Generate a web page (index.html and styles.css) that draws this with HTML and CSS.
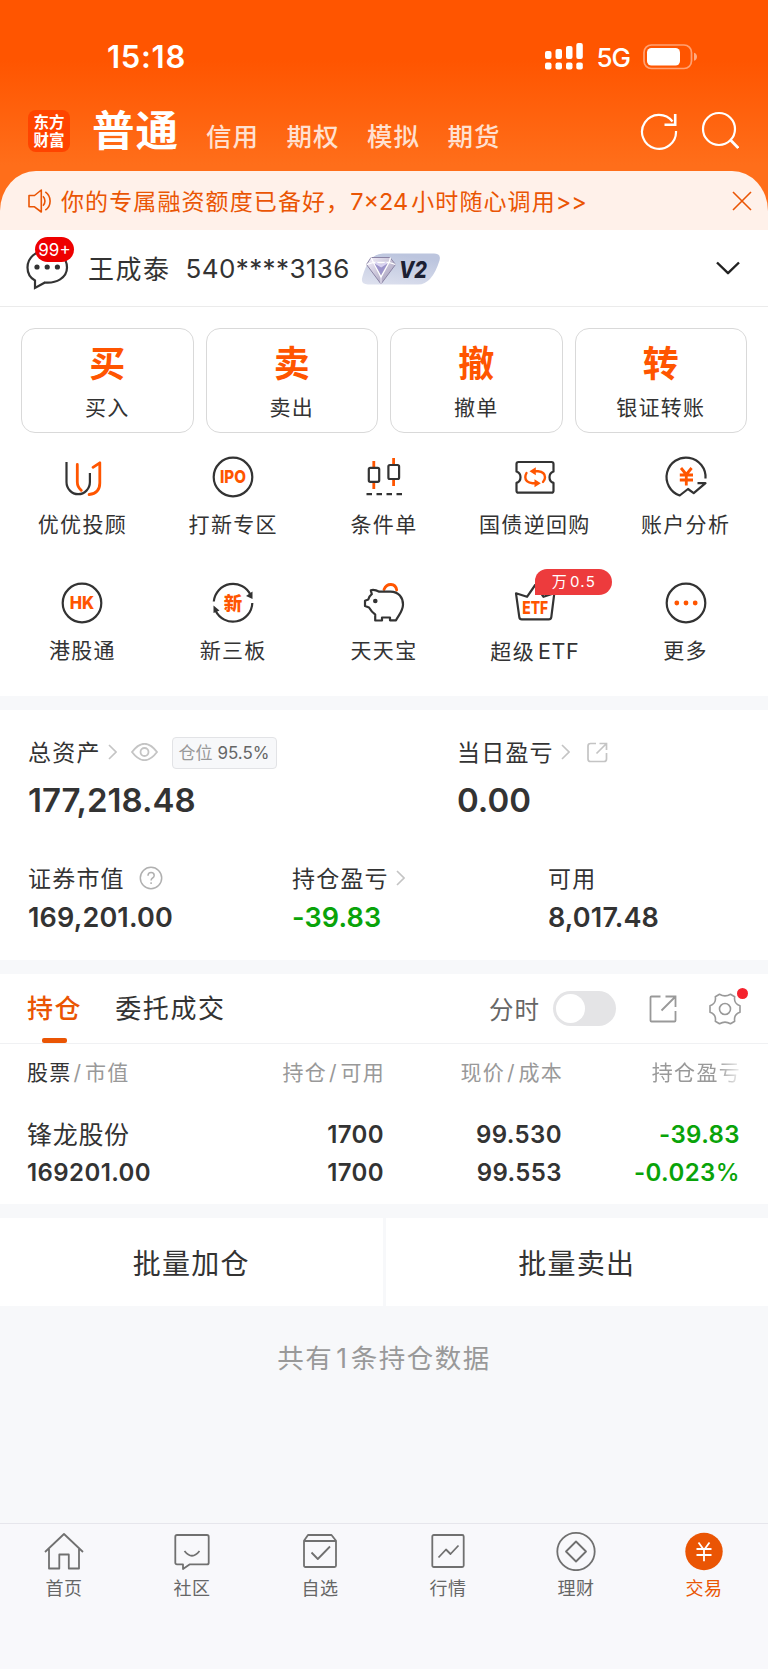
FILE: index.html
```html
<!DOCTYPE html>
<html lang="zh-CN">
<head>
    <meta charset="UTF-8">
    <meta name="viewport" content="width=device-width, initial-scale=1.0">
    <title>东方财富 - 交易</title>
    <link rel="stylesheet" href="styles.css">
</head>
<body>
    <header class="header">
        <div class="status-bar">
            <span class="time">15:18</span>
            <div class="status-icons">
                <svg class="signal" width="38" height="27" viewBox="0 0 38 27" fill="#fff">
                    <rect x="0" y="8" width="6.5" height="8" rx="2"/>
                    <rect x="10.5" y="6" width="6.5" height="10" rx="2"/>
                    <rect x="21" y="3" width="6.5" height="13" rx="2"/>
                    <rect x="31.3" y="0" width="6.5" height="16" rx="2"/>
                    <rect x="0" y="19.5" width="6.5" height="7" rx="2"/>
                    <rect x="10.5" y="19.5" width="6.5" height="7" rx="2"/>
                    <rect x="21" y="19.5" width="6.5" height="7" rx="2"/>
                    <rect x="31.3" y="19.5" width="6.5" height="7" rx="2"/>
                </svg>
                <span class="network">5G</span>
                <svg class="battery" width="55" height="26" viewBox="0 0 55 26">
                    <rect x="1" y="1" width="47.5" height="23.5" rx="7.5" fill="none" stroke="#fff" stroke-opacity=".45" stroke-width="1.7"/>
                    <rect x="4" y="4" width="33" height="17.5" rx="4.5" fill="#fff"/>
                    <path d="M51 8.8c4 1 4 7 0 8z" fill="#fff" fill-opacity=".5"/>
                </svg>
            </div>
        </div>

        <div class="top-nav">
            <div class="logo">东方<br>财富</div>
            <nav class="account-tabs">
                <span class="account-tab active">普通</span>
                <span class="account-tab">信用</span>
                <span class="account-tab">期权</span>
                <span class="account-tab">模拟</span>
                <span class="account-tab">期货</span>
            </nav>
            <div class="top-actions">
                <svg width="38" height="40" viewBox="0 0 38 40" fill="none" stroke="#fff" stroke-width="2.2">
                    <path d="M36 20A17 17 0 1 1 32.5 10.5"/>
                    <path d="M35.2 3v10.8H24.5" stroke-width="2.6"/>
                </svg>
                <svg width="38" height="40" viewBox="0 0 38 40" fill="none" stroke="#fff" stroke-width="2.2">
                    <circle cx="18" cy="18" r="16"/>
                    <path d="M29 28.5l8.3 8.5" stroke-width="2.8"/>
                </svg>
            </div>
        </div>

        <div class="notice">
            <svg width="24" height="24" viewBox="0 0 24 24" fill="none" stroke="#ea5504" stroke-width="1.6" stroke-linejoin="round">
                <path d="M1 6.5h5.5L13.3 1v22L6.5 17.8H1z"/>
                <path d="M15 7.2c2.6 2.6 2.6 7 0 9.6M17.3 2.8c6.4 4.3 6.4 14.1 0 18.4"/>
            </svg>
            <p>你的专属融资额度已备好，<span class="latin">7×24</span>小时随心调用<span class="latin">&gt;&gt;</span></p>
            <svg class="notice-close" width="20" height="20" viewBox="0 0 20 20" fill="none" stroke="#ea5504" stroke-width="1.6">
                <path d="M1 1l18 18M19 1L1 19"/>
            </svg>
        </div>
    </header>

    <section class="account">
        <div class="message">
            <svg width="44" height="44" viewBox="0 0 44 44" fill="none" stroke="#333" stroke-width="2.2">
                <path d="M10 41V33.5C4.5 30.5 2.5 26 2.5 20.5 2.5 10.5 11 3.5 22.3 3.5S42 10.5 42 20.5C42 31 31 36.5 20 35.5Z"/>
                <g fill="#333" stroke="none"><circle cx="12" cy="20" r="2.6"/><circle cx="22.2" cy="20" r="2.6"/><circle cx="32.4" cy="20" r="2.6"/></g>
            </svg>
            <span class="message-count">99+</span>
        </div>
        <span class="user-name">王成泰</span>
        <span class="user-number">540****3136</span>
        <svg class="level" width="80" height="32" viewBox="0 0 80 32">
            <defs>
                <linearGradient id="levelBg" x1="0" y1="1" x2=".4" y2="0">
                    <stop offset="0" stop-color="#dfe2ef"/>
                    <stop offset="1" stop-color="#bcc5de"/>
                </linearGradient>
                <linearGradient id="gem" x1="0" y1="0" x2="1" y2="1">
                    <stop offset="0" stop-color="#f6f2fd"/>
                    <stop offset="1" stop-color="#9a94b2"/>
                </linearGradient>
            </defs>
            <path d="M22 .5H73q7.500 0 5.500 7Q71 31.500 57 31.500H7Q-1 31.500 1.500 23.500 8 .5 22 .5Z" fill="url(#levelBg)"/>
            <path d="M10 4.500H29L34.500 11.500 20 31 5.500 11.500Z" fill="url(#gem)" stroke="#8b84a5" stroke-width="1"/>
            <path d="M10 4.500l2.500 5H28l1.500-5M5.500 11.500l7-2L20 24l8-14.500 6.500 2" fill="none" stroke="#fff" stroke-width="1.3"/>
            <path d="M13.500 10.500l6.700 4 6.300-4L20 22Z" fill="#9c94cb"/>
            <path d="M14.500 9.500l5.700 3.500 5.300-3.500" fill="none" stroke="#d9d3f3" stroke-width="2"/>
            <path d="M20 24v7" stroke="#efeaf8"/>
            <text class="level-text" x="38" y="25" textLength="28" lengthAdjust="spacingAndGlyphs">V2</text>
        </svg>
        <svg class="account-arrow" width="24" height="14" viewBox="0 0 24 14" fill="none" stroke="#222" stroke-width="2.4" stroke-linejoin="round">
            <path d="M1 1.5L12 12.2 23 1.5"/>
        </svg>
    </section>

    <section class="trade">
        <div class="trade-cards">
            <div class="trade-card"><strong>买</strong><span>买入</span></div>
            <div class="trade-card"><strong>卖</strong><span>卖出</span></div>
            <div class="trade-card"><strong>撤</strong><span>撤单</span></div>
            <div class="trade-card"><strong>转</strong><span>银证转账</span></div>
        </div>

        <div class="menu">
            <div class="menu-item">
                <svg class="icon" viewBox="0 0 44 44">
                    <path class="dark" d="M6.5 7V27a11.7 12.2 0 0 0 23.4 0V18"/>
                    <path class="hot" d="M17.3 9.5V27q0 5 4 8.3M33 12.3l6.8-4.5V28q0 10.5-10.7 11.500"/>
                </svg>
                <span>优优投顾</span>
            </div>
            <div class="menu-item">
                <svg class="icon" viewBox="0 0 44 44">
                    <circle class="dark" cx="22" cy="22" r="19.3"/>
                    <text class="icon-text" x="22" y="28.3" font-size="17.5" textLength="26" lengthAdjust="spacingAndGlyphs">IPO</text>
                </svg>
                <span>打新专区</span>
            </div>
            <div class="menu-item">
                <svg class="icon" viewBox="0 0 44 44">
                    <path class="hot flat" d="M11.8 6v6.5M11.8 27.5v6.5M31.6 3v6.5M31.6 24.5v6.5"/>
                    <rect class="dark" x="6.8" y="12.8" width="10.4" height="14" rx="1.5"/>
                    <rect class="dark" x="26.4" y="10" width="10.7" height="14" rx="1.5"/>
                    <path class="dark" d="M4.5 39.2H40" stroke-dasharray="5.5 4.5"/>
                </svg>
                <span>条件单</span>
            </div>
            <div class="menu-item">
                <svg class="icon" viewBox="0 0 44 44">
                    <path class="dark" d="M5.5 7h33q2 0 2 2v7.5q-4 1.5-4 5.7t4 5.7v7.8q0 2-2 2h-33q-2 0-2-2v-7.8q4-1.5 4-5.7t-4-5.7V9q0-2 2-2Z"/>
                    <path class="hot thin" d="M22 16.2H25Q32 16.8 32 22.3 32 25 30 27M22 28.2H19.5Q12.3 27.5 12.3 22.3 12.3 20 13.5 18"/>
                    <path d="M22.8 12.2v8l-6.3-4zM21.5 24.2v8l6.3-4z" fill="#ff5500"/>
                </svg>
                <span>国债逆回购</span>
            </div>
            <div class="menu-item">
                <svg class="icon" viewBox="0 0 44 44">
                    <path class="dark" d="M41.5 23.5A19.5 19.5 0 1 0 15.7 40.5L24 34l5.7 4.2L41.5 28.2h-8"/>
                    <path class="hot flat" d="M17 13l5.3 6.5L27.6 13M15.8 20h13.2M15.8 25h13.2M22.3 19v11.5"/>
                </svg>
                <span>账户分析</span>
            </div>
            <div class="menu-item">
                <svg class="icon" viewBox="0 0 44 44">
                    <circle class="dark" cx="22" cy="22" r="19.3"/>
                    <text class="icon-text" x="22" y="28.3" font-size="17.5" textLength="24.5" lengthAdjust="spacingAndGlyphs">HK</text>
                </svg>
                <span>港股通</span>
            </div>
            <div class="menu-item">
                <svg class="icon" viewBox="0 0 44 44">
                    <path class="dark" d="M2.8 20.5A19.3 19.3 0 0 1 39.5 14M41.3 22A19.3 19.3 0 0 1 4.5 29.5"/>
                    <path d="M41.5 10.5v7.5l-6.5-3zM2.5 24.5v7.5l6-2.5z" fill="#333"/>
                    <text class="icon-text" x="22" y="28.7" font-size="18.5">新</text>
                </svg>
                <span>新三板</span>
            </div>
            <div class="menu-item">
                <svg class="icon" viewBox="0 0 44 44">
                    <path class="hot" d="M22 8.5C25 1.5 33.5 2 34.7 9"/>
                    <path class="dark" d="M8.8 9.2c3-.8 6 .2 8.5 1.5H28C37 10.5 41 17 41 23.5S37 33.5 34 39.3H28V36.5H20V39.5H13.2V33.5C10 31.5 8.5 29 7 26.5L3 25V19.8l3.3-1.3C7 16 8 14.5 9.8 13.2Z"/>
                    <circle cx="13.3" cy="20" r="2.3" fill="#333"/>
                </svg>
                <span>天天宝</span>
            </div>
            <div class="menu-item">
                <svg class="icon" viewBox="0 0 44 44">
                    <path class="dark" d="M3 12.3l11 3.5L22.2 4l8.3 11.8 10.8-3.5-3 23.8q-.4 2.3-2.5 2.3H8.8q-2.2 0-2.5-2.3Z"/>
                    <text class="icon-text" x="22.2" y="32.5" font-size="18" textLength="26" lengthAdjust="spacingAndGlyphs">ETF</text>
                </svg>
                <em class="menu-badge">万<b>0.5</b></em>
                <span>超级<b class="menu-latin">ETF</b></span>
            </div>
            <div class="menu-item">
                <svg class="icon" viewBox="0 0 44 44">
                    <circle class="dark" cx="22" cy="22" r="19.3"/>
                    <g fill="#ff5500"><circle cx="12.8" cy="22" r="2.4"/><circle cx="22" cy="22" r="2.4"/><circle cx="31.2" cy="22" r="2.4"/></g>
                </svg>
                <span>更多</span>
            </div>
        </div>
    </section>

    <section class="assets">
        <div class="asset-main">
            <div class="asset">
                <div class="asset-label">
                    总资产
                    <svg class="more" width="9" height="16" viewBox="0 0 9 16"><path d="M1 1l7 7-7 7"/></svg>
                    <svg class="eye" width="27" height="18" viewBox="0 0 27 18" fill="none" stroke="#c4c4c4" stroke-width="1.8">
                        <path d="M1 9Q13.5-7.5 26 9 13.5 25.5 1 9Z"/>
                        <circle cx="13.5" cy="9" r="4"/>
                    </svg>
                    <span class="position-tag">仓位 <b>95.5%</b></span>
                </div>
                <div class="asset-value big">177,218.48</div>
            </div>
            <div class="asset">
                <div class="asset-label">
                    当日盈亏
                    <svg class="more" width="9" height="16" viewBox="0 0 9 16"><path d="M1 1l7 7-7 7"/></svg>
                    <svg class="share" width="21" height="21" viewBox="0 0 21 21" fill="none" stroke="#c4c4c4" stroke-width="1.7">
                        <path d="M9 1.5H3.5q-2.500 0-2.500 2.500v13q0 2.500 2.500 2.500h13.500q2.500 0 2.500-2.500V11M12.500 1.500h7v6.500M19.500 1.500L9.500 11.500"/>
                    </svg>
                </div>
                <div class="asset-value big">0.00</div>
            </div>
        </div>
        <div class="asset-sub">
            <div class="asset">
                <div class="asset-label">
                    证券市值
                    <svg class="help" width="24" height="24" viewBox="0 0 24 24" fill="none" stroke="#b0b0b0" stroke-width="1.5">
                        <circle cx="12" cy="12" r="10.7"/>
                        <path d="M9 9.8q0-3.2 3.1-3.2t3.1 2.9q0 1.5-1.6 2.5t-1.5 2.5M12.1 16.2v1.8"/>
                    </svg>
                </div>
                <div class="asset-value">169,201.00</div>
            </div>
            <div class="asset">
                <div class="asset-label">
                    持仓盈亏
                    <svg class="more" width="9" height="16" viewBox="0 0 9 16"><path d="M1 1l7 7-7 7"/></svg>
                </div>
                <div class="asset-value down">-39.83</div>
            </div>
            <div class="asset">
                <div class="asset-label">可用</div>
                <div class="asset-value">8,017.48</div>
            </div>
        </div>
    </section>

    <section class="holdings">
        <div class="tabs">
            <span class="tab active">持仓</span>
            <span class="tab">委托成交</span>
            <div class="tools">
                <span class="tools-label">分时</span>
                <span class="switch"></span>
                <svg class="tool-share" width="28" height="28" viewBox="0 0 28 28" fill="none" stroke="#999" stroke-width="1.8">
                    <path d="M11.5 1.5H2.5q-1 0-1 1v23q0 1 1 1h23q1 0 1-1V16M16.5 1.5h10V12M26.5 1.5L12.5 15.5"/>
                </svg>
                <div class="settings">
                    <svg width="32" height="32" viewBox="0 0 32 32" fill="none" stroke="#999" stroke-width="1.6" stroke-linejoin="round">
                        <path d="M10.5 1.2Q16 4.5 21.5 1.2L25.7 3.7Q24.5 10.5 31 12.7V19.3Q24.5 21.5 25.7 28.3L21.5 30.8Q16 27.5 10.5 30.8L6.3 28.3Q7.5 21.5 1 19.3V12.7Q7.5 10.5 6.3 3.7Z"/>
                        <circle cx="16" cy="16" r="5.5"/>
                    </svg>
                    <i class="dot"></i>
                </div>
            </div>
        </div>

        <div class="row row-head">
            <span><b>股票</b><i>/</i>市值</span>
            <span>持仓<i>/</i>可用</span>
            <span>现价<i>/</i>成本</span>
            <span class="faded">持仓盈亏</span>
        </div>
        <div class="row row-stock">
            <div><p class="stock-name">锋龙股份</p><p>169201.00</p></div>
            <div><p>1700</p><p>1700</p></div>
            <div><p>99.530</p><p>99.553</p></div>
            <div class="down"><p>-39.83</p><p>-0.023<b>%</b></p></div>
        </div>
    </section>

    <div class="batch">
        <button class="batch-btn">批量加仓</button>
        <button class="batch-btn">批量卖出</button>
    </div>

    <p class="summary">共有<span>1</span>条持仓数据</p>

    <nav class="bottom-nav">
        <div class="nav-item">
            <svg width="40" height="40" viewBox="0 0 40 40">
                <path d="M1 21L20 3l19 18M5 18v19.5h10.3V23.5h9.5V37.5H35V18"/>
            </svg>
            <span>首页</span>
        </div>
        <div class="nav-item">
            <svg width="40" height="40" viewBox="0 0 40 40">
                <path d="M5 4h30q1.7 0 1.7 1.7v26q0 1.7-1.7 1.7H17.5L11 38V33.4H5q-1.7 0-1.7-1.7V5.7Q3.3 4 5 4ZM12.5 20q7.5 9.5 15 0"/>
            </svg>
            <span>社区</span>
        </div>
        <div class="nav-item">
            <svg width="40" height="40" viewBox="0 0 40 40">
                <path d="M4 9.7L8 4h23.5l4.5 5.7V34.5q0 1.5-1.5 1.5H5.5Q4 36 4 34.5ZM4 10h32M11.5 21.5l6.3 6.5L30 15.5"/>
            </svg>
            <span>自选</span>
        </div>
        <div class="nav-item">
            <svg width="40" height="40" viewBox="0 0 40 40">
                <rect x="4.3" y="4" width="31.4" height="32" rx="1.5"/>
                <path d="M10.5 26.5l7.5-8 4.5 4.5 8-8.5"/>
            </svg>
            <span>行情</span>
        </div>
        <div class="nav-item">
            <svg width="40" height="40" viewBox="0 0 40 40">
                <circle cx="20" cy="20.5" r="18.7"/>
                <path d="M20 10.5l10 10-10 10-10-10z"/>
            </svg>
            <span>理财</span>
        </div>
        <div class="nav-item active">
            <svg width="40" height="40" viewBox="0 0 40 40">
                <circle cx="20" cy="20.5" r="18.7" fill="#ea5504" stroke="none"/>
                <path d="M14.5 11.5l5.5 7.5 5.5-7.5M12.5 18h15M12.5 24h15M20 18.5v11.8" stroke="#fff"/>
            </svg>
            <span>交易</span>
        </div>
    </nav>
</body>
</html>
```
FILE: styles.css
```css
:root {
    --primary-color: #ff5500;
    --accent-color: #ea5504;
    --text-color: #333;
    --muted-color: #999;
    --down-color: #09a309;
    --page-color: #f7f8fa;
}

* {
    margin: 0;
    padding: 0;
    box-sizing: border-box;
}

body {
    font-family: Inter, "Noto Sans CJK SC", sans-serif;
    background: var(--page-color);
    color: var(--text-color);
    height: 1669px;
    display: flex;
    flex-direction: column;
    overflow: hidden;
    white-space: nowrap;
}

svg {
    display: block;
    flex: none;
}

i, em {
    font-style: normal;
}

/* Header */
.header {
    background: linear-gradient(#ff5500 60px, #ff6e1a 165px);
    color: white;
}

.status-bar {
    height: 95px;
    padding: 18px 70px 0 107px;
    display: flex;
    justify-content: space-between;
    align-items: center;
}

.time {
    font-size: 31px;
    font-weight: 600;
    letter-spacing: .7px;
}

.status-icons {
    display: flex;
    align-items: center;
}

.network {
    font-size: 26px;
    font-weight: 500;
    margin: 2px 13px 0;
    letter-spacing: -1px;
}

.top-nav {
    height: 76px;
    padding: 0 29px 0 28px;
    display: flex;
    align-items: center;
}

.logo {
    width: 42px;
    height: 42px;
    margin-top: -4px;
    padding-top: 3px;
    border-radius: 8px;
    background: #ff4400;
    font-family: "Noto Sans CJK SC", sans-serif;
    font-size: 15.5px;
    font-weight: 700;
    line-height: 17.5px;
    text-align: center;
}

.account-tabs {
    display: flex;
    align-items: center;
    margin-left: 22px;
}

.account-tab {
    font-size: 25.5px;
    font-weight: 500;
    letter-spacing: 1px;
    line-height: 50px;
    margin: 8px 27.5px 0 0;
    color: #ffe0d0;
}

.account-tab.active {
    font-size: 42.5px;
    font-weight: 700;
    margin-top: -5px;
    margin-right: 27px;
    color: white;
}

.top-actions {
    display: flex;
    gap: 23px;
    margin: -4px 0 0 auto;
}

.notice {
    height: 59px;
    padding: 0 16px 0 28px;
    display: flex;
    align-items: center;
    background: #fff1ea;
    border-radius: 36px 36px 0 0 / 40px 40px 0 0;
    color: var(--accent-color);
    font-size: 23px;
    letter-spacing: 1.1px;
}

.notice p {
    margin: -2px 0 0 9px;
}

.latin {
    margin-right: 3px;
    font-size: 23.5px;
    letter-spacing: 0;
}

.notice-close {
    margin-left: auto;
}

/* Account */
.account {
    height: 77px;
    padding: 0 28px 0 25px;
    display: flex;
    align-items: center;
    background: white;
    border-bottom: 1px solid #ebebeb;
    font-size: 26px;
}

.message {
    position: relative;
    margin-top: 2px;
}

.message-count {
    position: absolute;
    left: 10px;
    top: -10px;
    width: 39px;
    height: 25px;
    border-radius: 13px;
    background: #ee0000;
    color: white;
    font-size: 17px;
    line-height: 26px;
    text-align: center;
}

.user-name {
    margin: -2px 0 0 19px;
    letter-spacing: 1.5px;
}

.user-number {
    margin-left: 15px;
    letter-spacing: .4px;
}

.level {
    margin: 1px 0 0 11px;
}

.level-text {
    font: italic 800 23px Inter, sans-serif;
    fill: #1c2033;
}

.account-arrow {
    margin-left: auto;
}

/* Trade entry */
.trade {
    height: 390px;
    padding-top: 21px;
    background: white;
}

.trade-cards {
    display: grid;
    grid-template-columns: repeat(4, 1fr);
    gap: 12px;
    padding: 0 21px;
}

.trade-card {
    height: 105px;
    border: 1px solid #d9d9d9;
    border-radius: 14px;
    display: flex;
    flex-direction: column;
    align-items: center;
    font-size: 21px;
    letter-spacing: 1.3px;
}

.trade-card strong {
    margin: 9px 0 0;
    font-size: 36px;
    line-height: 52px;
    letter-spacing: 0;
    color: var(--primary-color);
}

.trade-card span {
    margin-top: 1px;
    line-height: 34px;
}

.menu {
    display: grid;
    grid-template-columns: repeat(5, 1fr);
    grid-auto-rows: 126px;
    padding: 22px 7px 0;
}

.menu-item {
    position: relative;
    display: flex;
    flex-direction: column;
    align-items: center;
    font-size: 21px;
    letter-spacing: 1.3px;
}

.menu-item span {
    margin-top: 9px;
    line-height: 34px;
}

.menu-latin {
    margin-left: 3px;
    font-size: 21.5px;
    font-weight: 400;
    letter-spacing: .6px;
}

.icon {
    width: 44px;
    height: 44px;
}

.dark, .hot {
    fill: none;
    stroke: #333;
    stroke-width: 2.2;
    stroke-linejoin: round;
}

.hot {
    stroke: var(--primary-color);
    stroke-width: 2.8;
    stroke-linecap: round;
}

.hot.flat {
    stroke-linecap: butt;
}

.hot.thin {
    stroke-width: 2.4;
}

.icon-text {
    font-family: Inter, "Noto Sans CJK SC", sans-serif;
    font-weight: 800;
    letter-spacing: 0;
    text-anchor: middle;
    fill: var(--primary-color);
}

.menu-badge {
    position: absolute;
    left: 76px;
    top: -12px;
    width: 77px;
    height: 26px;
    border-radius: 12px 13px 13px 0;
    background: #ed3b3d;
    color: white;
    font-size: 15px;
    line-height: 26px;
    text-align: center;
}

.menu-badge b {
    margin-left: 2px;
    font-weight: 400;
}

/* Assets */
.assets {
    height: 264px;
    padding: 24px 28px 0;
    margin-top: -1px;
    background: white;
    border-top: 14px solid var(--page-color);
}

.asset-main {
    display: grid;
    grid-template-columns: 429px 1fr;
    height: 126px;
}

.asset-sub {
    display: grid;
    grid-template-columns: 264px 256px 1fr;
}

.asset-label {
    height: 34px;
    display: flex;
    align-items: center;
    font-size: 23px;
    letter-spacing: 1.2px;
}

.asset-label svg {
    position: relative;
    top: 1px;
}

.asset-value {
    font-size: 27px;
    font-weight: 600;
    line-height: 48px;
    letter-spacing: .15px;
}

.asset-value.big {
    font-size: 33px;
    line-height: 65px;
    letter-spacing: 0;
}

.more {
    margin-left: 7px;
    fill: none;
    stroke: #c4c4c4;
    stroke-width: 1.6;
}

.eye {
    margin-left: 14px;
}

.share {
    margin-left: 17px;
}

.help {
    margin-left: 14px;
}

.position-tag {
    height: 32px;
    margin: 4px 0 0 14px;
    padding: 0 6px;
    border: 1px solid #e2e3e6;
    border-radius: 4px;
    background: #f7f8fa;
    color: var(--muted-color);
    font-size: 17px;
    line-height: 30px;
    letter-spacing: 0;
}

.position-tag b {
    font-weight: 400;
    color: #666;
}

.down {
    color: var(--down-color);
}

/* Holdings */
.holdings {
    background: white;
    border-top: 14px solid var(--page-color);
    height: 244px;
}

.tabs {
    height: 70px;
    padding: 0 27px 0 27px;
    display: flex;
    align-items: center;
    border-bottom: 1px solid #f0f1f3;
}

.tab {
    position: relative;
    font-size: 26px;
    line-height: 69px;
    letter-spacing: 1.6px;
    margin-right: 33px;
}

.tab.active {
    color: var(--accent-color);
    font-weight: 500;
}

.tab.active::after {
    content: "";
    position: absolute;
    left: 15px;
    bottom: 0;
    width: 25px;
    height: 5px;
    border-radius: 2px;
    background: var(--accent-color);
}

.tools {
    display: flex;
    align-items: center;
    margin-left: auto;
}

.tools-label {
    font-size: 24.5px;
    letter-spacing: 1px;
    color: #666;
}

.switch {
    width: 63px;
    height: 35px;
    margin-left: 13px;
    padding: 3px;
    border-radius: 18px;
    background: #e4e4e6;
}

.switch::before {
    content: "";
    display: block;
    width: 29px;
    height: 29px;
    border-radius: 50%;
    background: white;
}

.tool-share {
    margin-left: 33px;
}

.settings {
    position: relative;
    margin-left: 32px;
}

.dot {
    position: absolute;
    right: -7px;
    top: -5px;
    width: 11px;
    height: 11px;
    border-radius: 50%;
    background: #f5222d;
}

.row {
    display: grid;
    grid-template-columns: 179px 178px 178px 178px;
    padding-left: 27px;
    text-align: right;
}

.row > :first-child {
    text-align: left;
}

.row-head {
    color: var(--muted-color);
    font-size: 21px;
    letter-spacing: 1.3px;
    line-height: 58px;
}

.row-head span {
    margin-right: -1px;
}

.row-head b {
    font-weight: 400;
    color: var(--text-color);
}

.row-head i {
    margin: 0 2.5px 0 2px;
}

.faded {
    -webkit-mask-image: linear-gradient(to right, #000 155px, transparent 182px);
    mask-image: linear-gradient(to right, #000 155px, transparent 182px);
}

.row-stock {
    padding-top: 14px;
    font-size: 24px;
    font-weight: 600;
    line-height: 38px;
    letter-spacing: .4px;
}

.row-stock b {
    font-weight: 500;
}

.stock-name {
    font-size: 25px;
    font-weight: 400;
    letter-spacing: .7px;
}

.batch {
    display: grid;
    grid-template-columns: 1fr 1fr;
    gap: 3px;
    margin-top: 14px;
}

.batch-btn {
    height: 88px;
    border: none;
    background: white;
    color: var(--text-color);
    font-family: inherit;
    font-size: 28px;
    letter-spacing: 1.2px;
}

.summary {
    margin-top: 32px;
    text-align: center;
    font-size: 26.5px;
    line-height: 40px;
    letter-spacing: 1.5px;
    color: var(--muted-color);
}

.summary span {
    margin: 0 2px 0 3px;
}

/* Bottom navigation */
.bottom-nav {
    height: 146px;
    margin-top: auto;
    display: grid;
    grid-template-columns: repeat(6, 1fr);
    background: #f8f8fb;
    border-top: 1px solid #e6e6ec;
}

.nav-item {
    display: flex;
    flex-direction: column;
    align-items: center;
    padding-top: 7px;
    font-size: 18px;
    letter-spacing: .6px;
    color: #666;
}

.nav-item svg {
    fill: none;
    stroke: #707070;
    stroke-width: 1.8;
    stroke-linejoin: round;
}

.nav-item span {
    margin-top: 5px;
    line-height: 26px;
}

.nav-item.active {
    color: var(--accent-color);
}
```
